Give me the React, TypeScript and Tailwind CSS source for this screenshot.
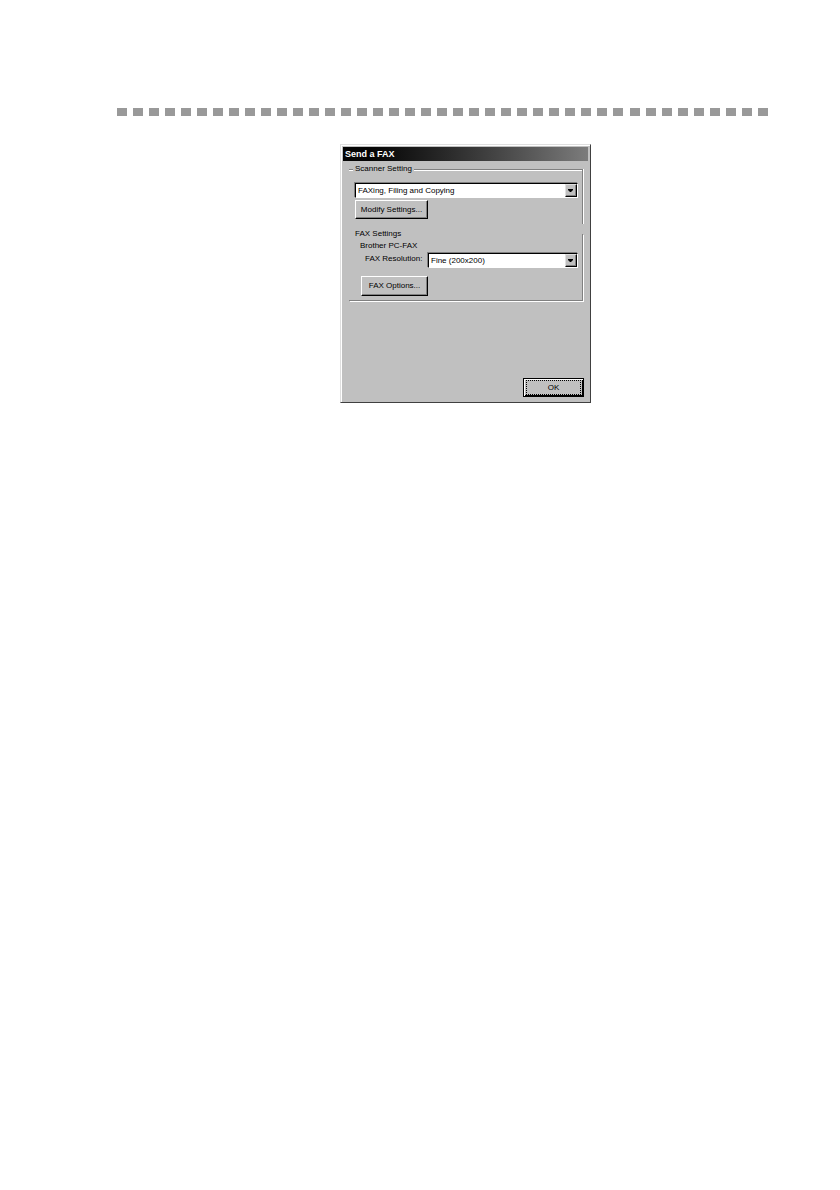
import React from "react";

const face =
  "border border-t-white border-l-white border-r-black border-b-black bg-[#c0c0c0] shadow-[inset_-1px_-1px_0_#808080] text-center whitespace-nowrap";

function Dropdown({ id, label, value, className }: { id: string; label?: string; value: string; className: string }) {
  return (
    <div className={`relative h-[15px] ${className}`}>
      <select
        id={id}
        aria-label={label}
        className="block h-full w-full appearance-none border border-t-black border-l-black border-r-white border-b-white bg-white pl-[2px] leading-[13px] shadow-[-1px_-1px_0_#808080] outline-none"
      >
        <option>{value}</option>
      </select>
      <span className="pointer-events-none absolute top-px right-px flex h-[13px] w-[12px] items-center justify-center border border-t-[#dfdfdf] border-l-[#dfdfdf] border-r-black border-b-black bg-[#c0c0c0] shadow-[inset_-1px_-1px_0_#808080]">
        <svg width="6" height="3" viewBox="0 0 6 3" aria-hidden="true">
          <path d="M0 0H5V1L3 3H2L0 1Z" fill="#000" />
        </svg>
      </span>
    </div>
  );
}

export default function App() {
  return (
    <main className="min-h-screen bg-white pt-[108px] font-['Liberation_Sans',sans-serif] text-[8px] leading-[12px] text-black">
      <div className="mr-[72px] ml-[117px] flex justify-between" aria-hidden="true">
        {Array.from({ length: 41 }, (_, i) => (
          <span key={i} className="h-2 w-[10px] bg-[#999999]" />
        ))}
      </div>

      <div className="mt-7 pl-[340px]">
        <section
          role="dialog"
          aria-labelledby="title"
          className="w-full max-w-[251px] border border-t-[#dfdfdf] border-l-[#dfdfdf] border-r-[#404040] border-b-[#404040] bg-[#c0c0c0] shadow-[inset_1px_1px_0_#fff]"
        >
          <h1
            id="title"
            className="mx-[2px] mt-[2px] h-[14px] bg-linear-to-r from-[#050505] from-10% to-[#7c7c7c] pl-[2px] text-[9px] leading-[14px] font-bold text-white"
          >
            Send a FAX
          </h1>

          <form className="pt-[2px] pr-[6px] pb-[5px] pl-2" onSubmit={(e) => e.preventDefault()}>
            <fieldset className="mr-px h-[61px] border-t border-r border-[#808080] shadow-[inset_0_1px_0_#fff,1px_0_0_#fff]">
              <legend className="ml-[4px] bg-[#c0c0c0] px-[2px]">Scanner Setting</legend>
              <div className="pt-[8px] pr-[4px] pl-[6px]">
                <Dropdown id="profile" label="Scanner Setting" value="FAXing, Filing and Copying" className="w-full" />
                <button type="button" className={`mt-[2px] block h-[19px] w-[73px] ${face}`}>
                  Modify Settings...
                </button>
              </div>
            </fieldset>

            <fieldset className="mt-[4px] mr-px border-r border-b border-[#808080] pb-[4px] shadow-[1px_1px_0_#fff]">
              <legend className="ml-[6px]">FAX Settings</legend>
              <p className="ml-[11px]">Brother PC-FAX</p>
              <div className="flex pt-px pr-[4px] pl-4">
                <label htmlFor="resolution" className="w-[63px] shrink-0 whitespace-nowrap">
                  FAX Resolution:
                </label>
                <Dropdown id="resolution" value="Fine (200x200)" className="flex-1" />
              </div>
              <button type="button" className={`mt-[8px] ml-[12px] block h-5 w-[67px] ${face}`}>
                FAX Options...
              </button>
            </fieldset>

            <div className="mt-[77px] flex justify-end">
              <button type="submit" className="h-[19px] w-[61px] border border-black bg-[#c0c0c0] p-px shadow-[inset_1px_1px_0_#fff,inset_-1px_-1px_0_#000]">
                <span className="mx-px block border border-dotted border-black leading-[13px]">OK</span>
              </button>
            </div>
          </form>
        </section>
      </div>
    </main>
  );
}
